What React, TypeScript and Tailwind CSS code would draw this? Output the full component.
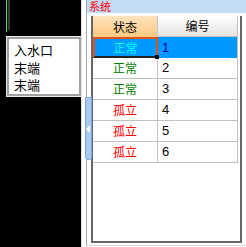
import React from "react"

const rows = [
  { state: "正常", num: "1", color: "text-[#00ffff]", selected: true },
  { state: "正常", num: "2", color: "text-[#008000]" },
  { state: "正常", num: "3", color: "text-[#008000]" },
  { state: "孤立", num: "4", color: "text-[#ff0000]" },
  { state: "孤立", num: "5", color: "text-[#ff0000]" },
  { state: "孤立", num: "6", color: "text-[#ff0000]" },
]

const cjk = "font-['Microsoft_YaHei','Noto_Sans_CJK_SC',sans-serif]"

export default function App() {
  return (
    <div className={`w-[246px] h-[247px] flex bg-white overflow-hidden ${cjk}`}>
      {/* left drawing area */}
      <div className="relative w-[81px] h-full bg-black shrink-0">
        <div className="absolute left-[6px] top-0 w-[1px] h-[32px] bg-[#5ee05e]" />
        <div className="absolute left-[8px] top-0 w-[2px] h-[30px] bg-[#3a3a3a]" />
        <div className="absolute left-[6px] top-[36px] w-[76px] h-[61px] bg-white border border-[#e8e8e8] z-10">
          <div className="w-full h-full border-2 border-[#a0a0a0] bg-white pl-[5px] pt-[2px] flex flex-col text-[13px] text-black">
            <div className="h-[17.5px] leading-[17px]">入水口</div>
            <div className="h-[17.5px] leading-[17px]">末端</div>
            <div className="h-[17.5px] leading-[17px]">末端</div>
          </div>
        </div>
      </div>
      <div className="w-[1px] h-full bg-[#e0e0e0]" />

      {/* right panel */}
      <div className="relative flex-1 h-full pl-[4px] pb-[1px] bg-white">
        <div className="h-full border-l border-[#a8a8a8] border-b border-b-[#d8d8d8] flex flex-col">
          <div className="h-[13px] bg-[#c2dbf7] text-[#ff0000] text-[11px] leading-[13px] pl-[2px]">系统</div>
          <div className="flex-1 pl-[4px] pr-[4px] pt-[3px] pb-[2px]">
            <div className="h-full border-l-2 border-r-2 border-b-2 border-[#666666] flex flex-col">
              <div className="flex h-[21px] text-[12px] text-black">
                <div className="w-[65px] flex items-center justify-center bg-gradient-to-b from-[#fee3bd] to-[#fcc980] border-r border-[#c8c8c8]">状态</div>
                <div className="w-[80px] flex items-center justify-center bg-gradient-to-b from-[#ffffff] to-[#e4e4e4] border-r border-b border-[#c0c0c0]">编号</div>
              </div>
              {rows.map((r, i) => (
                <div key={i} className="flex h-[21px]">
                  {r.selected ? (
                    <>
                      <div className="relative w-[65px] flex items-center justify-center bg-[#0099ff] border-2 border-[#e0501a] text-[12px] text-[#00ffff] border-b-[#222]">
                        {r.state}
                        <div className="absolute -right-[3px] -bottom-[3px] w-[4px] h-[4px] bg-black" />
                      </div>
                      <div className="w-[80px] flex items-center pl-[4px] bg-[#0099ff] text-[#0000aa] font-['Liberation_Sans',sans-serif] text-[13px] border-r border-[#c0c0c0]">{r.num}</div>
                    </>
                  ) : (
                    <>
                      <div className={`w-[65px] flex items-center justify-center border-r border-b border-[#c0c0c0] text-[12px] ${r.color}`}>{r.state}</div>
                      <div className="w-[80px] flex items-center pl-[4px] border-r border-b border-[#c0c0c0] text-black font-['Liberation_Sans',sans-serif] text-[13px]">{r.num}</div>
                    </>
                  )}
                </div>
              ))}
            </div>
          </div>
        </div>
        {/* splitter tab */}
        <div className="absolute left-[3px] top-[97px] w-[7px] h-[63px] bg-[#a9c9f2] border border-[#7ea7dc] rounded-b-[3px] flex items-center">
          <div className="w-0 h-0 border-y-[4px] border-y-transparent border-r-[4px] border-r-white" />
        </div>
      </div>
    </div>
  )
}
